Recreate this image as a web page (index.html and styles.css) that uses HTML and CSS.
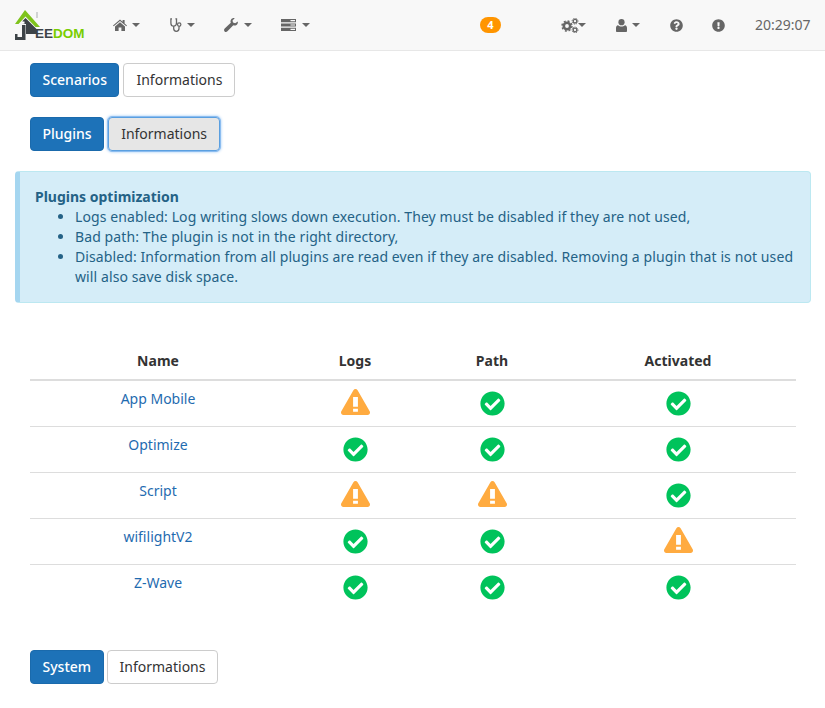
FILE: index.html
```html
<!DOCTYPE html>
<html lang="en">
<head>
<meta charset="utf-8">
<title>Jeedom - Health</title>
<link rel="stylesheet" href="styles.css">
</head>
<body>
<svg class="defs" width="0" height="0" aria-hidden="true">
  <symbol id="ok" viewBox="0 0 512 512"><path d="M504 256c0 136.967-111.033 248-248 248S8 392.967 8 256 119.033 8 256 8s248 111.033 248 248zM227.314 387.314l184-184c6.248-6.248 6.248-16.379 0-22.627l-22.627-22.627c-6.248-6.249-16.379-6.249-22.628 0L216 308.118l-70.059-70.059c-6.248-6.248-16.379-6.248-22.628 0l-22.627 22.627c-6.248 6.248-6.248 16.379 0 22.627l104 104c6.249 6.249 16.379 6.249 22.628.001z"/></symbol>
  <symbol id="warn" viewBox="0 0 576 512"><path fill-rule="evenodd" d="M569.500 440c18.500 32-4.700 72-41.600 72H48c-37 0-60-40-41.500-72L246.400 24c18.500-32 64.700-32 83.200 0zM240 156v194h96V156zM240 390v62h96v-62z"/></symbol>
  <symbol id="caret" viewBox="0 0 8 4"><path d="M0 0h8L4 4z"/></symbol>
</svg>
<header class="navbar">
  <a class="logo" href="#">
    <svg class="logo-mark" viewBox="0 0 25 30" width="25" height="30" aria-hidden="true">
      <path fill="#a9adb0" d="M21.500 2h1v6h-1z"/>
      <path fill="#3d4347" d="M10.500 8 22 19.500V24H11V14H7.500v-3z"/>
      <path fill="#3d4347" d="M7 15h3.500v15H0v-6h2.500v3H7z"/>
      <path fill="#7fc31c" d="M0 14 10 0l15 17h-4.500L10.500 6.500 3.500 14z"/>
      <path fill="#fff" d="M7 11.500h2.500v2.300H7z"/>
    </svg>
    <span class="logo-text"><span class="logo-dark">EE</span><span class="logo-green">DOM</span></span>
  </a>
  <nav class="menu">
    <a class="menu-item home" href="#">
      <svg class="ico" width="14" height="12" viewBox="0 0 14 12"><path d="M7 0.500 9.600 2.700V1h2v3.400L14 6.500l-.7.8L7 2 .7 7.300 0 6.500zM2 7.400 7 3.200l5 4.200V12H8.400V8.600H5.600V12H2z"/></svg>
      <svg class="caret"><use href="#caret"/></svg>
    </a>
    <a class="menu-item steth" href="#">
      <svg class="ico" width="13" height="14" viewBox="0 0 13 14"><path fill="none" stroke="#666" stroke-width="1.300" d="M2 .8H.9V5c0 2 1.300 3.200 2.800 3.200S6.500 7 6.500 5V.8H5.400M3.700 8.200V10.500c0 1.700 1 2.800 2.600 2.800S9 12 9 10.500V8.500"/><circle cx="9.200" cy="6.600" r="1.700" fill="none" stroke="#666" stroke-width="1.200"/></svg>
      <svg class="caret"><use href="#caret"/></svg>
    </a>
    <a class="menu-item wrench" href="#">
      <svg class="ico" width="14" height="14" viewBox="0 0 14 14"><path d="M13.800 3.400c.3 1.400-.2 2.800-1.300 3.500-1 .7-2.200.8-3.200.3L3.400 13.300c-.8.900-2 .9-2.800.1s-.7-2 .1-2.800L6.800 4.700C6.300 3.700 6.400 2.500 7.100 1.500 7.900.4 9.300-.2 10.700.2L8.500 2.500l.5 2.100 2.200.6z"/></svg>
      <svg class="caret"><use href="#caret"/></svg>
    </a>
    <a class="menu-item server" href="#">
      <svg class="ico" width="15" height="12" viewBox="0 0 15 12"><path fill-rule="evenodd" d="M0 0h15v3.200H0zM9.500 1v1.200H14V1zM0 4.400h15v3.200H0zM9.500 5.400v1.200H14V5.400zM0 8.800h15V12H0zM9.500 9.800V11H14V9.800z"/></svg>
      <svg class="caret"><use href="#caret"/></svg>
    </a>
  </nav>
  <span class="badge">4</span>
  <div class="tools">
    <a class="tool gears" href="#">
      <svg class="ico" width="18" height="15" viewBox="0 0 18 15"><g fill="none" stroke="#666"><circle cx="6" cy="8" r="3.200" stroke-width="2.600"/><circle cx="6" cy="8" r="5" stroke-width="1.400" stroke-dasharray="2 1.930"/><circle cx="14" cy="3.200" r="1.800" stroke-width="1.300"/><circle cx="14" cy="3.200" r="2.900" stroke-width="1" stroke-dasharray="1.300 1.000"/><circle cx="14" cy="12" r="1.800" stroke-width="1.300"/><circle cx="14" cy="12" r="2.900" stroke-width="1" stroke-dasharray="1.300 1.000"/></g></svg>
      <svg class="caret"><use href="#caret"/></svg>
    </a>
    <a class="tool user" href="#">
      <svg class="ico" width="11" height="13" viewBox="0 0 11 13"><circle cx="5.500" cy="3.200" r="3.100"/><path d="M2 6.200c1 .9 2.200 1.300 3.500 1.300S8 7.100 9 6.200c1.300.2 2 1.200 2 3V12c0 .6-.5 1-1 1H1c-.5 0-1-.4-1-1V9.200c0-1.800.7-2.800 2-3z"/></svg>
      <svg class="caret"><use href="#caret"/></svg>
    </a>
    <a class="tool help" href="#">
      <svg class="ico" width="13" height="13" viewBox="0 0 512 512"><path d="M504 256c0 136.997-111.043 248-248 248S8 392.997 8 256C8 119.083 119.043 8 256 8s248 111.083 248 248zM262.655 90c-54.497 0-89.255 22.957-116.549 63.758-3.536 5.286-2.353 12.415 2.715 16.258l34.699 26.31c5.205 3.947 12.621 3.008 16.665-2.122 17.864-22.658 30.113-35.797 57.303-35.797 20.429 0 45.698 13.148 45.698 32.958 0 14.976-12.363 22.667-32.534 33.976C247.128 238.528 216 254.941 216 296v4c0 6.627 5.373 12 12 12h56c6.627 0 12-5.373 12-12v-1.333c0-28.462 83.186-29.647 83.186-106.667 0-58.002-60.165-102-116.531-102zM256 338c-25.365 0-46 20.635-46 46 0 25.364 20.635 46 46 46s46-20.636 46-46c0-25.365-20.635-46-46-46z"/></svg>
    </a>
    <a class="tool alert-ico" href="#">
      <svg class="ico" width="13" height="13" viewBox="0 0 512 512"><path d="M504 256c0 136.997-111.043 248-248 248S8 392.997 8 256C8 119.083 119.043 8 256 8s248 111.083 248 248zm-248 50c-25.405 0-46 20.595-46 46s20.595 46 46 46 46-20.595 46-46-20.595-46-46-46zm-43.673-165.346l7.418 136c.347 6.364 5.609 11.346 11.982 11.346h48.546c6.373 0 11.635-4.982 11.982-11.346l7.418-136c.375-6.874-5.098-12.654-11.982-12.654h-63.383c-6.884 0-12.356 5.780-11.981 12.654z"/></svg>
    </a>
    <span class="clock">20:29:07</span>
  </div>
</header>

<main class="content">
  <div class="btn-row first">
    <button class="btn primary">Scenarios</button>
    <button class="btn">Informations</button>
  </div>
  <div class="btn-row second">
    <button class="btn primary">Plugins</button>
    <button class="btn active">Informations</button>
  </div>

  <section class="callout">
    <strong class="callout-title">Plugins optimization</strong>
    <ul>
      <li>Logs enabled: Log writing slows down execution. They must be disabled if they are not used,</li>
      <li>Bad path: The plugin is not in the right directory,</li>
      <li>Disabled: Information from all plugins are read even if they are disabled. Removing a plugin that is not used will also save disk space.</li>
    </ul>
  </section>

  <table class="plugins">
    <thead>
      <tr><th class="c-name">Name</th><th class="c-logs">Logs</th><th class="c-path">Path</th><th class="c-act">Activated</th></tr>
    </thead>
    <tbody>
      <tr><td><a href="#">App Mobile</a></td>
        <td><svg class="warn"><use href="#warn"/></svg></td>
        <td><svg class="ok"><use href="#ok"/></svg></td>
        <td><svg class="ok"><use href="#ok"/></svg></td></tr>
      <tr><td><a href="#">Optimize</a></td>
        <td><svg class="ok"><use href="#ok"/></svg></td>
        <td><svg class="ok"><use href="#ok"/></svg></td>
        <td><svg class="ok"><use href="#ok"/></svg></td></tr>
      <tr><td><a href="#">Script</a></td>
        <td><svg class="warn"><use href="#warn"/></svg></td>
        <td><svg class="warn"><use href="#warn"/></svg></td>
        <td><svg class="ok"><use href="#ok"/></svg></td></tr>
      <tr><td><a href="#">wifilightV2</a></td>
        <td><svg class="ok"><use href="#ok"/></svg></td>
        <td><svg class="ok"><use href="#ok"/></svg></td>
        <td><svg class="warn"><use href="#warn"/></svg></td></tr>
      <tr><td><a href="#">Z-Wave</a></td>
        <td><svg class="ok"><use href="#ok"/></svg></td>
        <td><svg class="ok"><use href="#ok"/></svg></td>
        <td><svg class="ok"><use href="#ok"/></svg></td></tr>
    </tbody>
  </table>

  <div class="btn-row third">
    <button class="btn primary">System</button>
    <button class="btn">Informations</button>
  </div>
</main>
</body>
</html>
```
FILE: styles.css
```css
* { box-sizing: border-box; }
html, body { margin: 0; padding: 0; }
body {
  font-family: "Noto Sans", "Open Sans", sans-serif;
  font-size: 14px;
  line-height: 20px;
  color: #333;
  background: #fff;
}
a { text-decoration: none; }
.defs { position: absolute; }

.navbar {
  display: flex;
  align-items: center;
  height: 51px;
  background: #f8f8f8;
  border-bottom: 1px solid #e7e7e7;
  color: #666;
}
.logo {
  display: flex;
  flex: none;
  align-items: flex-end;
  width: 113px;
  height: 30px;
  padding-left: 15px;
}
.logo-mark { flex: none; }
.logo-text {
  font-family: "Liberation Sans", sans-serif;
  font-weight: 700;
  font-size: 13.5px;
  line-height: 12px;
  margin-left: -5px;
}
.logo-dark { color: #3d4347; }
.logo-green { color: #78cd00; }

.menu { display: flex; align-items: center; flex: none; }
.menu-item, .tool {
  display: flex;
  flex: none;
  align-items: center;
  height: 20px;
}
.ico { fill: #666; flex: none; }
.caret { width: 8px; height: 4px; fill: #666; margin-left: 5px; flex: none; }
.menu-item { margin-right: 30px; }
.steth { margin-right: 29px; }
.wrench { margin-right: 29px; }
.steth .caret { margin-left: 4px; }
.wrench .caret { margin-left: 6px; }
.server .caret { margin-left: 6px; }

.badge {
  flex: none;
  margin-left: 140px;
  width: 21px;
  height: 16px;
  border-radius: 8px;
  background: #ff9500;
  color: #fff;
  font-size: 11px;
  font-weight: 700;
  line-height: 16px;
  text-align: center;
}
.tools { display: flex; align-items: center; flex: none; margin-left: 60px; }
.tool.gears { margin-right: 30px; }
.gears .caret { margin-left: -1px; }
.tool.user { margin-right: 30px; }
.user .caret { margin-left: 5px; }
.tool.help { margin-right: 29px; }
.tool.alert-ico { margin-right: 30px; }
.clock { color: #666; font-size: 14px; }

.content { padding: 12px 14px 0 15px; }

.btn-row { display: flex; gap: 4px; padding-left: 15px; }
.btn-row.second { margin-top: 20px; }
.btn-row.third { margin-top: 40px; gap: 3px; }

.btn {
  height: 34px;
  padding: 6px 12px;
  border: 1px solid #ccc;
  border-radius: 4px;
  background: #fff;
  color: #333;
  font: 14px/20px "Noto Sans", "Open Sans", sans-serif;
}
.btn.primary {
  padding: 6px 11.5px;
  background: #1d72b8;
  border-color: #1a6aac;
  color: #fff;
  font-weight: 500;
}
.btn.active {
  background: #e6e6e6;
  border-color: #5a9fe0;
  outline: 1px solid #8cbdf0;
  box-shadow: 0 0 3px 1px #9cc8f5;
}

.callout {
  margin-top: 20px;
  height: 132px;
  padding: 15px;
  background: #d5edf8;
  border: 1px solid #bce8f1;
  border-left: 5px solid #a5d6f0;
  border-radius: 4px;
  color: #246286;
}
.callout-title { display: block; font-weight: 700; }
.callout ul { margin: 0; padding-left: 40px; letter-spacing: 0.1px; }

.plugins {
  width: 766px;
  margin: 42px 0 0 15px;
  border-collapse: collapse;
  table-layout: fixed;
}
.plugins th {
  height: 35px;
  padding: 6px 0 0;
  text-align: center;
  font-weight: 700;
  color: #333;
  border-bottom: 2px solid #ddd;
  vertical-align: top;
}
.c-name { width: 256px; }
.c-logs { width: 138px; }
.c-path { width: 136px; }
.c-act { width: 236px; }
.plugins td {
  height: 46px;
  padding: 8px 8px 0;
  text-align: center;
  vertical-align: top;
  border-top: 1px solid #ddd;
}
.plugins tbody tr:first-child td { border-top: 0; }
.plugins a { color: #1f6bb0; }
.ok { width: 25px; height: 25px; fill: #00c35b; display: block; margin: 2px auto 0; }
.warn { width: 29px; height: 26px; fill: #ffab40; display: block; margin: 0 auto; }
```
